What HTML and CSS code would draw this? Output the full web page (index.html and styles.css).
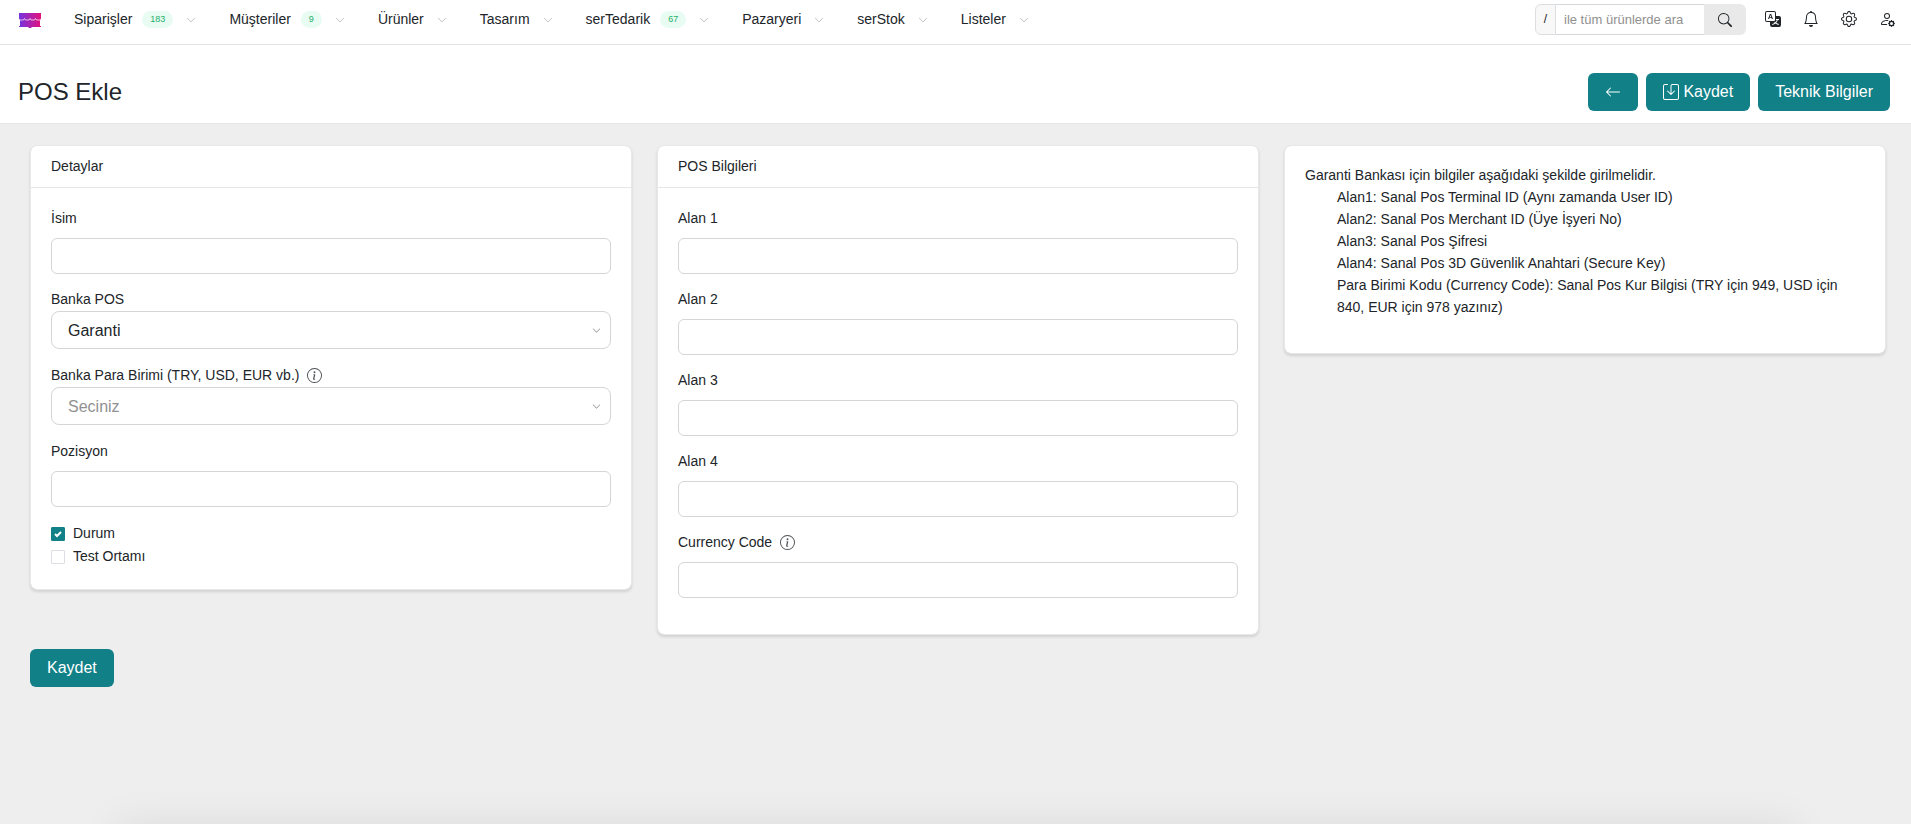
FILE: index.html
```html
<!DOCTYPE html>
<html lang="tr">
<head>
<meta charset="utf-8">
<title>POS Ekle</title>
<link rel="stylesheet" href="styles.css">
</head>
<body>
<svg class="sprite" aria-hidden="true">
  <symbol id="chevron" viewBox="0 0 16 16"><path fill-rule="evenodd" d="M1.646 4.646a.5.5 0 0 1 .708 0L8 10.293l5.646-5.647a.5.5 0 0 1 .708.708l-6 6a.5.5 0 0 1-.708 0l-6-6a.5.5 0 0 1 0-.708"/></symbol>
  <symbol id="info" viewBox="0 0 16 16"><path d="M8 15A7 7 0 1 1 8 1a7 7 0 0 1 0 14m0 1A8 8 0 1 0 8 0a8 8 0 0 0 0 16"/><path d="m8.93 6.588-2.29.287-.082.38.45.083c.294.07.352.176.288.469l-.738 3.468c-.194.897.105 1.319.808 1.319.545 0 1.178-.252 1.465-.598l.088-.416c-.2.176-.492.246-.686.246-.275 0-.375-.193-.304-.533zM9 4.500a1 1 0 1 1-2 0 1 1 0 0 1 2 0"/></symbol>
</svg>

<header class="topbar">
  <a class="logo" href="#" aria-label="Ana sayfa">
    <svg width="22" height="16" viewBox="0 0 22 16">
      <defs><linearGradient id="brand" x1="0" y1="0" x2="1" y2="0"><stop offset="0" stop-color="#7433e0"/><stop offset="1" stop-color="#e3127d"/></linearGradient></defs>
      <path fill="url(#brand)" d="M0 1h22v5.500l-1 1.500v6h1v1H12.500v1h-3v-1H0v-1h1V8L0 6.500z"/>
      <path fill="none" stroke="#fff" stroke-width=".7" d="M1 8h3.500l1-1.500L6.500 8H10l1-1.500L12 8h3.500l1-1.500 1 1.500H21"/>
    </svg>
  </a>
  <nav class="menu">
    <a href="#">Siparişler <span class="badge">183</span><svg class="chev"><use href="#chevron"/></svg></a>
    <a href="#">Müşteriler <span class="badge">9</span><svg class="chev"><use href="#chevron"/></svg></a>
    <a href="#">Ürünler <svg class="chev"><use href="#chevron"/></svg></a>
    <a href="#">Tasarım <svg class="chev"><use href="#chevron"/></svg></a>
    <a href="#">serTedarik <span class="badge">67</span><svg class="chev"><use href="#chevron"/></svg></a>
    <a href="#">Pazaryeri <svg class="chev"><use href="#chevron"/></svg></a>
    <a href="#">serStok <svg class="chev"><use href="#chevron"/></svg></a>
    <a href="#">Listeler <svg class="chev"><use href="#chevron"/></svg></a>
  </nav>
  <form class="search" role="search">
    <label class="search-key" for="q">/</label>
    <input id="q" type="text" placeholder="ile tüm ürünlerde ara">
    <button type="button" aria-label="Ara"><svg width="14" height="14" viewBox="0 0 16 16"><path d="M11.742 10.344a6.500 6.500 0 1 0-1.397 1.398h-.001q.044.06.098.115l3.850 3.850a1 1 0 0 0 1.415-1.414l-3.850-3.850a1 1 0 0 0-.115-.1zM12 6.500a5.500 5.500 0 1 1-11 0 5.500 5.500 0 0 1 11 0"/></svg></button>
  </form>
  <div class="tools">
    <button type="button" aria-label="Dil"><svg width="16" height="16" viewBox="0 0 16 16"><path d="M4.545 6.714 4.110 8H3l1.862-5h1.284L8 8H6.833l-.435-1.286zm1.634-.736L5.500 3.956h-.049l-.679 2.022z"/><path d="M0 2a2 2 0 0 1 2-2h7a2 2 0 0 1 2 2v3h3a2 2 0 0 1 2 2v7a2 2 0 0 1-2 2H7a2 2 0 0 1-2-2v-3H2a2 2 0 0 1-2-2zm2-1a1 1 0 0 0-1 1v7a1 1 0 0 0 1 1h7a1 1 0 0 0 1-1V2a1 1 0 0 0-1-1zm7.138 9.995q.289.451.63.846c-.748.575-1.673 1.001-2.768 1.292.178.217.451.635.555.867 1.125-.359 2.080-.844 2.886-1.494.777.665 1.739 1.165 2.930 1.472.133-.254.414-.673.629-.89-1.125-.253-2.057-.694-2.820-1.284.681-.747 1.222-1.651 1.621-2.757H14V8h-3v1.047h.765c-.318.844-.74 1.546-1.272 2.130a6 6 0 0 1-.415-.492 2 2 0 0 1-.94.31"/></svg></button>
    <button type="button" aria-label="Bildirimler"><svg width="16" height="16" viewBox="0 0 16 16"><path d="M8 16a2 2 0 0 0 2-2H6a2 2 0 0 0 2 2M8 1.918l-.797.161A4 4 0 0 0 4 6c0 .628-.134 2.197-.459 3.742-.16.767-.376 1.566-.663 2.258h10.244c-.287-.692-.502-1.490-.663-2.258C12.134 8.197 12 6.628 12 6a4 4 0 0 0-3.203-3.920zM14.220 12c.223.447.481.801.78 1H1c.299-.199.557-.553.78-1C2.680 10.200 3 6.880 3 6c0-2.420 1.720-4.440 4.005-4.901a1 1 0 1 1 1.990 0A5 5 0 0 1 13 6c0 .88.32 4.200 1.220 6"/></svg></button>
    <button type="button" aria-label="Ayarlar"><svg width="16" height="16" viewBox="0 0 16 16"><path d="M8 4.754a3.246 3.246 0 1 0 0 6.492 3.246 3.246 0 0 0 0-6.492M5.754 8a2.246 2.246 0 1 1 4.492 0 2.246 2.246 0 0 1-4.492 0"/><path d="M9.796 1.343c-.527-1.790-3.065-1.790-3.592 0l-.094.319a.873.873 0 0 1-1.255.52l-.292-.16c-1.640-.892-3.433.902-2.540 2.541l.159.292a.873.873 0 0 1-.52 1.255l-.319.094c-1.790.527-1.790 3.065 0 3.592l.319.094a.873.873 0 0 1 .52 1.255l-.16.292c-.892 1.640.901 3.434 2.541 2.540l.292-.159a.873.873 0 0 1 1.255.52l.094.319c.527 1.790 3.065 1.790 3.592 0l.094-.319a.873.873 0 0 1 1.255-.52l.292.16c1.640.893 3.434-.902 2.540-2.541l-.159-.292a.873.873 0 0 1 .52-1.255l.319-.094c1.790-.527 1.790-3.065 0-3.592l-.319-.094a.873.873 0 0 1-.52-1.255l.16-.292c.893-1.640-.902-3.433-2.541-2.540l-.292.159a.873.873 0 0 1-1.255-.52zm-2.633.283c.246-.835 1.428-.835 1.674 0l.094.319a1.873 1.873 0 0 0 2.693 1.115l.291-.16c.764-.415 1.600.42 1.184 1.185l-.159.292a1.873 1.873 0 0 0 1.116 2.692l.318.094c.835.246.835 1.428 0 1.674l-.319.094a1.873 1.873 0 0 0-1.115 2.693l.16.291c.415.764-.42 1.600-1.185 1.184l-.291-.159a1.873 1.873 0 0 0-2.693 1.116l-.094.318c-.246.835-1.428.835-1.674 0l-.094-.319a1.873 1.873 0 0 0-2.692-1.115l-.292.16c-.764.415-1.600-.42-1.184-1.185l.159-.291A1.873 1.873 0 0 0 1.945 8.930l-.319-.094c-.835-.246-.835-1.428 0-1.674l.319-.094A1.873 1.873 0 0 0 3.060 4.377l-.16-.292c-.415-.764.42-1.600 1.185-1.184l.292.159a1.873 1.873 0 0 0 2.692-1.115z"/></svg></button>
    <button type="button" aria-label="Hesap"><svg width="16" height="16" viewBox="0 0 16 16"><path d="M11 5a3 3 0 1 1-6 0 3 3 0 0 1 6 0M8 7a2 2 0 1 0 0-4 2 2 0 0 0 0 4m.256 7a4.500 4.500 0 0 1-.229-1.004H3c.001-.246.154-.986.832-1.664C4.484 10.680 5.711 10 8 10q.39 0 .74.025c.226-.341.496-.65.804-.918Q8.844 9.002 8 9c-5 0-6 3-6 4s1 1 1 1zm3.630-4.540c.18-.613 1.048-.613 1.229 0l.043.148a.64.64 0 0 0 .921.382l.136-.074c.561-.306 1.175.308.87.869l-.075.136a.64.64 0 0 0 .382.920l.149.045c.612.18.612 1.048 0 1.229l-.15.043a.64.64 0 0 0-.38.921l.074.136c.305.561-.309 1.175-.87.870l-.136-.075a.64.64 0 0 0-.92.382l-.045.149c-.18.612-1.048.612-1.229 0l-.043-.15a.64.64 0 0 0-.921-.38l-.136.074c-.561.305-1.175-.309-.87-.87l.075-.136a.64.64 0 0 0-.382-.92l-.148-.045c-.613-.18-.613-1.048 0-1.229l.148-.043a.64.64 0 0 0 .382-.921l-.074-.136c-.306-.561.308-1.175.869-.87l.136.075a.64.64 0 0 0 .92-.382zM14 12.500a1.500 1.500 0 1 0-3 0 1.500 1.500 0 0 0 3 0"/></svg></button>
  </div>
</header>

<div class="titlebar">
  <h1>POS Ekle</h1>
  <div class="actions">
    <button class="btn" type="button" aria-label="Geri"><svg width="16" height="16" viewBox="0 0 16 16"><path fill-rule="evenodd" d="M15 8a.5.5 0 0 0-.5-.5H2.707l3.147-3.146a.5.5 0 1 0-.708-.708l-4 4a.5.5 0 0 0 0 .708l4 4a.5.5 0 0 0 .708-.708L2.707 8.500H14.500A.5.5 0 0 0 15 8"/></svg></button>
    <button class="btn" type="submit" form="pos"><svg width="16" height="16" viewBox="0 0 16 16"><path d="M2 1a1 1 0 0 0-1 1v12a1 1 0 0 0 1 1h12a1 1 0 0 0 1-1V2a1 1 0 0 0-1-1H9.500a1 1 0 0 0-1 1v7.293l2.646-2.647a.5.5 0 0 1 .708.708l-3.500 3.500a.5.5 0 0 1-.708 0l-3.500-3.500a.5.5 0 1 1 .708-.708L7.500 9.293V2a2 2 0 0 1 2-2H14a2 2 0 0 1 2 2v12a2 2 0 0 1-2 2H2a2 2 0 0 1-2-2V2a2 2 0 0 1 2-2h2.500a.5.5 0 0 1 0 1z"/></svg>Kaydet</button>
    <button class="btn" type="button">Teknik Bilgiler</button>
  </div>
</div>

<main>
  <form id="pos" class="page">
    <div class="columns">
      <section class="card">
        <h2>Detaylar</h2>
        <div class="card-body">
          <div class="field"><label for="isim">İsim</label><input class="text" id="isim" type="text"></div>
          <div class="field field-select"><label for="banka">Banka POS</label>
            <div class="select"><select id="banka"><option>Garanti</option></select><svg class="arrow"><use href="#chevron"/></svg></div></div>
          <div class="field field-select"><label for="birim">Banka Para Birimi (TRY, USD, EUR vb.) <svg class="info"><use href="#info"/></svg></label>
            <div class="select"><select id="birim" class="empty"><option>Seciniz</option></select><svg class="arrow"><use href="#chevron"/></svg></div></div>
          <div class="field"><label for="poz">Pozisyon</label><input class="text" id="poz" type="text"></div>
          <label class="check"><span class="box"><input type="checkbox" checked><svg viewBox="0 0 14 14"><path d="m4 7 2 2 4-4"/></svg></span>Durum</label>
          <label class="check"><span class="box"><input type="checkbox"><svg viewBox="0 0 14 14"><path d="m4 7 2 2 4-4"/></svg></span>Test Ortamı</label>
        </div>
      </section>
      <section class="card">
        <h2>POS Bilgileri</h2>
        <div class="card-body">
          <div class="field"><label for="a1">Alan 1</label><input class="text" id="a1" type="text"></div>
          <div class="field"><label for="a2">Alan 2</label><input class="text" id="a2" type="text"></div>
          <div class="field"><label for="a3">Alan 3</label><input class="text" id="a3" type="text"></div>
          <div class="field"><label for="a4">Alan 4</label><input class="text" id="a4" type="text"></div>
          <div class="field"><label for="cc">Currency Code <svg class="info"><use href="#info"/></svg></label><input class="text" id="cc" type="text"></div>
        </div>
      </section>
      <section class="card">
        <div class="card-body notes">
          <p>Garanti Bankası için bilgiler aşağıdaki şekilde girilmelidir.</p>
          <ul>
            <li>Alan1: Sanal Pos Terminal ID (Aynı zamanda User ID)</li>
            <li>Alan2: Sanal Pos Merchant ID (Üye İşyeri No)</li>
            <li>Alan3: Sanal Pos Şifresi</li>
            <li>Alan4: Sanal Pos 3D Güvenlik Anahtari (Secure Key)</li>
            <li>Para Birimi Kodu (Currency Code): Sanal Pos Kur Bilgisi (TRY için 949, USD için 840, EUR için 978 yazınız)</li>
          </ul>
        </div>
      </section>
    </div>
    <button class="btn" type="submit">Kaydet</button>
  </form>
</main>
<div class="bottom-shade"></div>
</body>
</html>
```
FILE: styles.css
```css
* { box-sizing: border-box; }
body {
  margin: 0;
  background: #eee;
  color: #212529;
  font: 14px/21px "Liberation Sans", Arial, sans-serif;
}
button, input, select { font-family: inherit; color: inherit; }
svg { fill: currentColor; flex: none; }
.sprite { display: none; }

.topbar {
  display: flex;
  align-items: flex-start;
  height: 45px;
  padding: 4px 16px 0 19px;
  background: #fff;
  border-bottom: 1px solid #e4e4e4;
}
.logo { display: flex; margin: 8px 33px 0 0; }
.menu { display: flex; gap: 33px; margin-top: 5px; }
.menu a {
  display: flex;
  align-items: center;
  color: inherit;
  text-decoration: none;
  white-space: nowrap;
}
.badge {
  margin: 0 0 0 10px;
  padding: 0 8px;
  border-radius: 9px;
  background: #e8fcf3;
  color: #1fae6c;
  font-size: 9px;
  line-height: 17px;
}
.chev { width: 10px; height: 10px; margin-left: 13px; color: #aaa; }

.search { display: flex; height: 31px; margin-left: auto; }
.search-key {
  width: 21px;
  border: 1px solid #dcdfe2;
  border-radius: 6px 0 0 6px;
  background: #f8f8f8;
  font-size: 12px;
  line-height: 29px;
  text-align: center;
}
.search input {
  width: 148px;
  padding: 0 8px;
  border: 1px solid #d5d8db;
  border-width: 1px 0;
  outline: 0;
  font-size: 13px;
}
.search input::placeholder { color: #909090; opacity: 1; }
.search button {
  display: grid;
  place-items: center;
  width: 42px;
  border: 0;
  border-radius: 0 6px 6px 0;
  background: #e9e9e9;
}
.tools { display: flex; gap: 22px; margin: 7px 0 0 19px; }
.tools button { display: flex; padding: 0; border: 0; background: none; }

.titlebar {
  display: flex;
  align-items: center;
  justify-content: space-between;
  padding: 28px 21px 12px 18px;
  background: #fff;
  border-bottom: 1px solid #e6e6e6;
}
h1 { margin: 0; font-size: 24px; font-weight: 400; line-height: 28px; }
.actions { display: flex; gap: 8px; }
.btn {
  display: inline-flex;
  align-items: center;
  gap: 4px;
  padding: 7px 17px;
  border: 0;
  border-radius: 6px;
  background: #118087;
  color: #fff;
  font-size: 16px;
  line-height: 24px;
}
.actions .btn { min-height: 38px; }

.page { padding: 21px 25px 24px 30px; }
.columns {
  display: grid;
  grid-template-columns: repeat(3, minmax(0, 1fr));
  gap: 25px;
  align-items: start;
  margin-bottom: 14px;
}
.card {
  border: 1px solid #e8e8e8;
  border-radius: 7px;
  background: #fff;
  background-clip: padding-box;
  box-shadow: 0 2px 3px rgba(0, 0, 0, .12);
}
.card h2 {
  margin: 0;
  padding: 10px 20px;
  border-bottom: 1px solid #e6e6e6;
  font-size: 14px;
  font-weight: 400;
  line-height: 21px;
}
.card-body { padding: 20px 20px 21px; }
.field { display: flex; flex-direction: column; gap: 9px; margin-bottom: 15px; }
.field label { display: flex; align-items: center; }
.field-select { gap: 1px; margin-bottom: 16px; }
.info { width: 15px; height: 15px; margin-left: 8px; color: #4d5154; }
.text {
  width: 100%;
  height: 36px;
  padding: 0 12px;
  border: 1px solid #d5d5d5;
  border-radius: 6px;
  background: #fff;
  font-size: 14px;
}
.select { position: relative; }
.select select {
  display: block;
  width: 100%;
  height: 38px;
  padding: 0 16px;
  border: 1px solid #d5d5d5;
  border-radius: 8px;
  background: #fff;
  font-size: 16px;
  appearance: none;
}
.select .empty { color: #919191; }
.arrow {
  position: absolute;
  top: 15px;
  right: 10px;
  width: 9px;
  height: 9px;
  color: #888;
  pointer-events: none;
}
.check { display: flex; align-items: center; gap: 8px; line-height: 23px; }
.box { display: grid; }
.box input, .box svg { grid-area: 1 / 1; width: 14px; height: 14px; margin: 0; }
.box input {
  border: 1px solid #dcdfe4;
  border-radius: 1px;
  background: #fff;
  appearance: none;
}
.box input:checked { border-color: #118087; background: #118087; }
.box svg { fill: none; stroke: #fff; stroke-width: 2; pointer-events: none; }

.notes { padding: 18px 20px 35px; line-height: 22px; }
.notes p { margin: 0; }
.notes ul { margin: 0; padding: 0 0 0 32px; list-style: none; }

.bottom-shade {
  position: fixed;
  top: 100%;
  left: 6%;
  right: 6%;
  height: 40px;
  box-shadow: 0 0 40px rgba(0, 0, 0, .08);
}
```
